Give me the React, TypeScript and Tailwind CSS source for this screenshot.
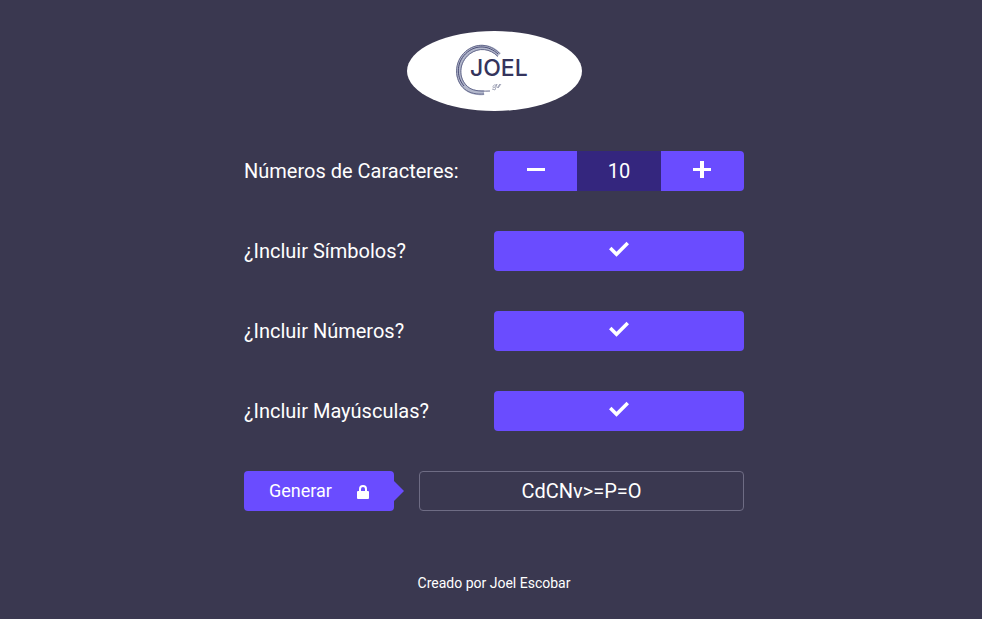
import { useState } from "react";

const CHARS = {
  base: "abcdefghijklmnopqrstuvwxyz",
  symbols: "!@#$%^&*()_-+={[}]<>,.",
  numbers: "0123456789",
  capitals: "ABCDEFGHIJKLMNOPQRSTUVWXYZ",
};

function Logo() {
  return (
    <svg viewBox="0 0 175 80" className="block h-20 w-[175px]" role="img" aria-label="Joel">
      <ellipse cx="87.5" cy="40" rx="87.5" ry="40" fill="#fff" />
      <g fill="none" stroke="#65698c">
        <path d="M92 24C84 15 71 13.500 61 21.500C49 31.500 49 48 59 57C63.500 61 69 62.500 77 61.500" stroke="#b3b8cc" strokeWidth="5" />
        <path d="M92.500 22.500C83 12.500 69 11.500 58.500 20.500C46.500 31 47 49 57.500 58C63 62.500 70 63.500 77 63" strokeWidth="1" />
        <path d="M91 25.500C83 17.500 72 16 62.500 23C51.500 32 51 47 60.500 55.500C65 59.500 71 60.500 83 60" strokeWidth="1" />
        <path d="M91 23C82 14.500 70 13.500 60.500 21C49.500 30 48.500 45 57 55" stroke="#4a4c76" strokeWidth="1" />
      </g>
      <text x="63" y="45" fill="#34345c" fontSize="23" fontWeight="500" fontFamily="Inter, sans-serif">
        JOEL
      </text>
      <path
        d="M89 54C86 53 85 57 87 57L90 53L88 59L85 58M90 57L93 53L91 57L94 53"
        fill="none"
        stroke="#9599ae"
        strokeWidth="0.800"
      />
    </svg>
  );
}

function MinusIcon() {
  return (
    <svg viewBox="0 0 24 24" className="size-6" fill="currentColor" aria-hidden="true">
      <path d="M3 9h18v3H3z" />
    </svg>
  );
}

function PlusIcon() {
  return (
    <svg viewBox="0 0 24 24" className="size-6" fill="currentColor" aria-hidden="true">
      <path d="M10 2h4v7h7v3h-7v7h-4v-7H3V9h7z" />
    </svg>
  );
}

function CheckIcon() {
  return (
    <svg viewBox="0 0 24 24" className="size-6" fill="currentColor" aria-hidden="true">
      <path d="M2 10.300l2.500-2.500 5 5L19.500 2.800 22 5.300 9.500 17.800z" />
    </svg>
  );
}

function CrossIcon() {
  return (
    <svg viewBox="0 0 24 24" className="size-6" fill="none" stroke="currentColor" strokeWidth="3" aria-hidden="true">
      <path d="M5 4l14 14M19 4L5 18" />
    </svg>
  );
}

function LockIcon() {
  return (
    <svg viewBox="0 0 12 16" className="h-4 w-3" aria-hidden="true">
      <path d="M3 9V6a3 3 0 0 1 6 0v3" fill="none" stroke="currentColor" strokeWidth="2" />
      <path d="M1 8h10a1 1 0 0 1 1 1v6a1 1 0 0 1-1 1H1a1 1 0 0 1-1-1V9a1 1 0 0 1 1-1z" fill="currentColor" />
    </svg>
  );
}

type OptionProps = { id: string; label: string; value: boolean; onToggle: () => void };

function OptionRow({ id, label, value, onToggle }: OptionProps) {
  return (
    <div className="grid grid-cols-2 items-center">
      <label htmlFor={id}>{label}</label>
      <button
        id={id}
        type="button"
        aria-pressed={value}
        onClick={onToggle}
        className="flex h-10 items-center justify-center rounded bg-[#6a4cff] hover:bg-[#5a3de8]"
      >
        {value ? <CheckIcon /> : <CrossIcon />}
      </button>
    </div>
  );
}

export default function App() {
  const [length, setLength] = useState(10);
  const [symbols, setSymbols] = useState(true);
  const [numbers, setNumbers] = useState(true);
  const [capitals, setCapitals] = useState(true);
  const [password, setPassword] = useState("CdCNv>=P=O");

  const generate = () => {
    const pool =
      CHARS.base +
      (symbols ? CHARS.symbols : "") +
      (numbers ? CHARS.numbers : "") +
      (capitals ? CHARS.capitals : "");
    setPassword(Array.from({ length }, () => pool[Math.floor(Math.random() * pool.length)]).join(""));
  };

  return (
    <div className="flex min-h-screen flex-col items-center bg-[#3a3850] pt-[31px] pl-1.5 font-[Roboto,sans-serif] text-xl text-white">
      <Logo />
      <main className="mt-10 flex w-full max-w-[500px] flex-col gap-10">
        <div className="grid grid-cols-2 items-center">
          <label htmlFor="length">Números de Caracteres:</label>
          <div className="grid h-10 grid-cols-3 overflow-hidden rounded bg-[#6a4cff]">
            <button
              type="button"
              aria-label="Menos"
              onClick={() => setLength(Math.max(1, length - 1))}
              className="flex items-center justify-center hover:bg-[#5a3de8]"
            >
              <MinusIcon />
            </button>
            <input
              id="length"
              readOnly
              value={length}
              className="w-full min-w-0 bg-[#34267e] text-center outline-none"
            />
            <button
              type="button"
              aria-label="Más"
              onClick={() => setLength(length + 1)}
              className="flex items-center justify-center hover:bg-[#5a3de8]"
            >
              <PlusIcon />
            </button>
          </div>
        </div>
        <OptionRow id="symbols" label="¿Incluir Símbolos?" value={symbols} onToggle={() => setSymbols(!symbols)} />
        <OptionRow id="numbers" label="¿Incluir Números?" value={numbers} onToggle={() => setNumbers(!numbers)} />
        <OptionRow id="capitals" label="¿Incluir Mayúsculas?" value={capitals} onToggle={() => setCapitals(!capitals)} />
        <div className="flex gap-[25px]">
          <button
            type="button"
            onClick={generate}
            className="relative flex h-10 w-[150px] shrink-0 items-center justify-between rounded bg-[#6a4cff] px-[25px] text-lg after:absolute after:top-2.5 after:left-full after:border-y-10 after:border-l-10 after:border-y-transparent after:border-l-[#6a4cff]"
          >
            Generar
            <LockIcon />
          </button>
          <input
            aria-label="Contraseña"
            readOnly
            value={password}
            className="h-10 w-full min-w-0 rounded border border-[#6e6c84] bg-transparent text-center outline-none"
          />
        </div>
      </main>
      <footer className="mt-[62px] pb-6 text-sm">Creado por Joel Escobar</footer>
    </div>
  );
}
